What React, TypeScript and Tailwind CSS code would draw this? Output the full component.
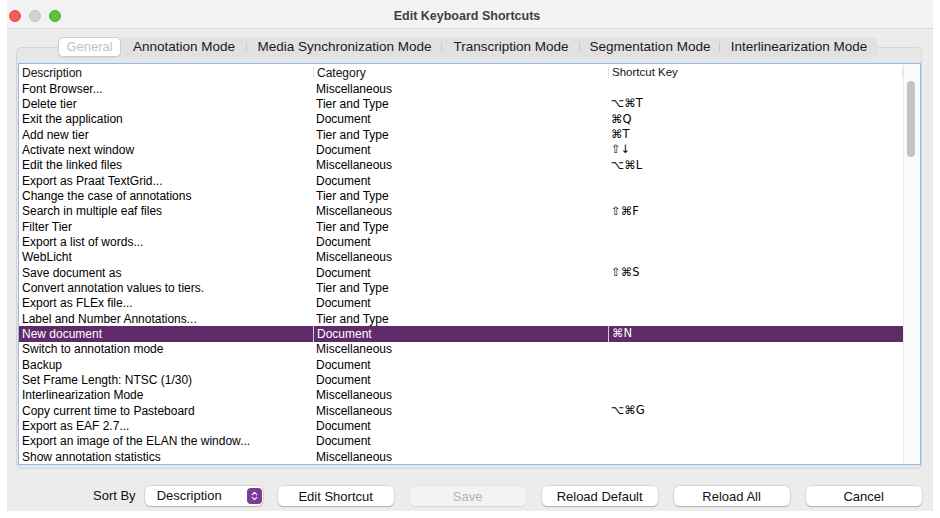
import { ChevronDown, ChevronUp } from 'lucide-react'

const rows: [string, string, string][] = [
  ['Font Browser...', 'Miscellaneous', ''],
  ['Delete tier', 'Tier and Type', '⌥⌘T'],
  ['Exit the application', 'Document', '⌘Q'],
  ['Add new tier', 'Tier and Type', '⌘T'],
  ['Activate next window', 'Document', '⇧↓'],
  ['Edit the linked files', 'Miscellaneous', '⌥⌘L'],
  ['Export as Praat TextGrid...', 'Document', ''],
  ['Change the case of annotations', 'Tier and Type', ''],
  ['Search in multiple eaf files', 'Miscellaneous', '⇧⌘F'],
  ['Filter Tier', 'Tier and Type', ''],
  ['Export a list of words...', 'Document', ''],
  ['WebLicht', 'Miscellaneous', ''],
  ['Save document as', 'Document', '⇧⌘S'],
  ['Convert annotation values to tiers.', 'Tier and Type', ''],
  ['Export as FLEx file...', 'Document', ''],
  ['Label and Number Annotations...', 'Tier and Type', ''],
  ['New document', 'Document', '⌘N'],
  ['Switch to annotation mode', 'Miscellaneous', ''],
  ['Backup', 'Document', ''],
  ['Set Frame Length: NTSC (1/30)', 'Document', ''],
  ['Interlinearization Mode', 'Miscellaneous', ''],
  ['Copy current time to Pasteboard', 'Miscellaneous', '⌥⌘G'],
  ['Export as EAF 2.7...', 'Document', ''],
  ['Export an image of the ELAN the window...', 'Document', ''],
  ['Show annotation statistics', 'Miscellaneous', ''],
]

const tabs: [string, string][] = [
  ['Annotation Mode', 'w-[126px]'],
  ['Media Synchronization Mode', 'w-[195px]'],
  ['Transcription Mode', 'w-[138px]'],
  ['Segmentation Mode', 'w-[140px]'],
  ['Interlinearization Mode', 'w-[158px]'],
]

const SELECTED = 16

function Button({ label, disabled }: { label: string; disabled?: boolean }) {
  return (
    <button
      className={`w-[116px] h-[20px] rounded-[5px] text-[13px] leading-none ${
        disabled
          ? 'bg-[#f3f3f3] text-[#b4b4b4] shadow-[0_0_0_0.5px_rgba(0,0,0,0.08),0_1px_1px_rgba(0,0,0,0.06)]'
          : 'bg-white text-[#111] shadow-[0_0_0_0.5px_rgba(0,0,0,0.18),0_1px_1px_rgba(0,0,0,0.18)]'
      }`}
    >
      {label}
    </button>
  )
}

export default function App() {
  return (
    <div className="w-[940px] h-[518px] bg-white font-['Liberation_Sans','DejaVu_Sans',sans-serif] text-[#111] overflow-hidden">
      <div className="ml-[7px] w-[926px] h-[511px] bg-[#ececec] flex flex-col">
        {/* title bar */}
        <div className="h-[29px] bg-[#f3f3f3] border-b border-[#d9d9d9] grid grid-cols-[1fr_auto_1fr] items-center">
          <div className="flex items-center gap-[8px] pl-[2px] pt-[4px]">
            <span className="w-[12px] h-[12px] rounded-full bg-[#ec5f57] border border-[#d9493f]" />
            <span className="w-[12px] h-[12px] rounded-full bg-[#d1d1d1] border border-[#c2c2c2]" />
            <span className="w-[12px] h-[12px] rounded-full bg-[#5cc23f] border border-[#48a92f]" />
          </div>
          <div className="text-[12.5px] font-bold text-[#3f3f3f] pt-[4px] -ml-[6px]">Edit Keyboard Shortcuts</div>
          <div />
        </div>

        {/* tabs */}
        <div className="mt-[8px] -mb-[10px] pl-[51px] flex relative z-10 h-[20px]">
          <div className="w-[63px] h-[20px] rounded-[5px] bg-white border border-[#cdcdcd] shadow-[0_1px_1px_rgba(0,0,0,0.08)] flex items-center justify-center text-[13px] text-[#c3c3c3]">
            General
          </div>
          <div className="flex h-[20px] bg-[#e1e1e1] rounded-r-[6px]">
            {tabs.map(([t, w], i) => (
              <div key={t} className={`${w} h-full flex items-center justify-center relative text-[13.5px] text-[#1a1a1a]`}>
                {t}
                {i < tabs.length - 1 && <span className="absolute right-0 top-[5px] h-[10px] w-px bg-[#cacaca]" />}
              </div>
            ))}
          </div>
        </div>

        {/* panel */}
        <div className="ml-[9px] w-[906px] h-[422px] rounded-[5px] border border-[#d6d6d6] bg-[#e7e7e7] pt-[15px] px-[1px]">
          <div className="w-[903px] border border-[#93bbe9] bg-white flex">
            <div className="w-[884px]">
              <div className="h-[17px] flex text-[12px] text-[#111]">
                <div className="w-[294px] pl-[3px] flex items-center">Description</div>
                <div className="w-[295px] pl-[3px] flex items-center border-l border-[#e2e2e2] my-[3px]">Category</div>
                <div className="w-[295px] pl-[3px] flex items-center border-l border-[#e2e2e2] border-r my-[3px] text-[11.5px]">Shortcut Key</div>
              </div>
              {rows.map(([d, c, k], i) => {
                const sel = i === SELECTED
                return (
                  <div
                    key={d}
                    className={`h-[15.33px] flex items-center text-[12px] leading-none whitespace-nowrap ${
                      sel ? 'bg-[#5e2a69] text-white' : 'text-black'
                    }`}
                  >
                    <div className="w-[294px] pl-[3px]">{d}</div>
                    <div className={`w-[295px] pl-[3px] h-full flex items-center ${sel ? 'border-l border-[#d9c9dc]' : ''}`}>{c}</div>
                    <div
                      className={`w-[295px] pl-[3px] h-full flex items-center font-['DejaVu_Sans',sans-serif] text-[11.5px] ${
                        sel ? 'border-l border-[#d9c9dc]' : ''
                      }`}
                    >
                      {k}
                    </div>
                  </div>
                )
              })}
            </div>
            <div className="w-[17px] bg-[#fafafa] border-l border-[#ececec] pt-[17px] pl-[3px]">
              <div className="w-[8px] h-[76px] rounded-full bg-[#c3c3c3]" />
            </div>
          </div>
        </div>

        {/* bottom bar */}
        <div className="mt-[17px] pl-[86px] flex items-center h-[20px]">
          <span className="text-[13px] text-[#111] whitespace-nowrap">Sort By</span>
          <div className="ml-[9px] w-[118px] h-[20px] rounded-[5px] bg-white shadow-[0_0_0_0.5px_rgba(0,0,0,0.18),0_1px_1px_rgba(0,0,0,0.18)] flex items-center pl-[12px] pr-[1px] text-[13px]">
            <span className="flex-1">Description</span>
            <span className="w-[15px] h-[16px] rounded-[4px] bg-[#7a3c98] flex flex-col items-center justify-center text-white">
              <ChevronUp size={9} strokeWidth={3} className="-mb-[2px]" />
              <ChevronDown size={9} strokeWidth={3} className="-mt-[2px]" />
            </span>
          </div>
          <div className="ml-[15px] flex gap-[16px]">
            <Button label="Edit Shortcut" />
            <Button label="Save" disabled />
            <Button label="Reload Default" />
            <Button label="Reload All" />
            <Button label="Cancel" />
          </div>
        </div>
      </div>
    </div>
  )
}
